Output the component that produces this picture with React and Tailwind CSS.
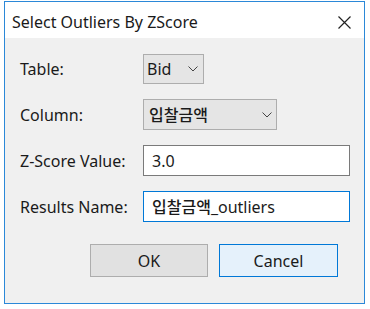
import React from "react";

const font = { fontFamily: '"Noto Sans", "Noto Sans CJK KR", sans-serif' };

function Chevron() {
  return (
    <svg width="10" height="6" viewBox="0 0 10 6" className="shrink-0">
      <path d="M0.5 0.5 L5 5 L9.5 0.5" fill="none" stroke="#444" strokeWidth="1" />
    </svg>
  );
}

export default function App() {
  return (
    <div className="w-[370px] h-[309px] bg-white pt-[1px] pl-[4px]" style={font}>
      <div className="w-[361px] h-[303px] border border-[#2b88d8] flex flex-col">
        <div className="h-[36px] bg-white flex items-center justify-between pl-[7px] pr-[13px] pt-[4px]">
          <span className="text-[16px] text-[#1a1a1a]">Select Outliers By ZScore</span>
          <svg width="13" height="13" viewBox="0 0 13 13">
            <path d="M0.5 0.5 L12.5 12.5 M12.5 0.5 L0.5 12.5" stroke="#222" strokeWidth="1.2" />
          </svg>
        </div>
        <div className="flex-1 bg-[#f0f0f0] pt-[16px] pl-[15px] pr-[13px] flex flex-col text-[16px] text-[#1a1a1a]">
          <div className="flex flex-col gap-[15px]">
            <div className="flex items-center h-[30px]">
              <span className="w-[123px]">Table:</span>
              <div className="w-[61px] h-[30px] bg-[#e5e5e5] border border-[#adadad] flex items-center justify-between pl-[3px] pr-[5px]">
                <span>Bid</span>
                <Chevron />
              </div>
            </div>
            <div className="flex items-center h-[31px]">
              <span className="w-[123px]">Column:</span>
              <div className="w-[134px] h-[31px] bg-[#e5e5e5] border border-[#adadad] flex items-center justify-between pl-[5px] pr-[4px]">
                <span className="font-medium">입찰금액</span>
                <Chevron />
              </div>
            </div>
            <div className="flex items-center h-[31px]">
              <span className="w-[123px]">Z-Score Value:</span>
              <div className="w-[207px] h-[31px] bg-white border border-[#7a7a7a] flex items-center pl-[8px]">
                <span>3.0</span>
              </div>
            </div>
            <div className="flex items-center h-[31px]">
              <span className="w-[123px]">Results Name:</span>
              <div className="w-[207px] h-[31px] bg-white border border-[#0078d7] flex items-center pl-[8px]">
                <span><span className="font-medium">입찰금액</span>_outliers</span>
              </div>
            </div>
          </div>
          <div className="flex gap-[11px] mt-[22px] pl-[70px]">
            <div className="w-[118px] h-[33px] bg-[#e1e1e1] border border-[#adadad] flex items-center justify-center">OK</div>
            <div className="w-[119px] h-[33px] bg-[#e5f1fb] border border-[#0078d7] flex items-center justify-center">Cancel</div>
          </div>
        </div>
      </div>
    </div>
  );
}
